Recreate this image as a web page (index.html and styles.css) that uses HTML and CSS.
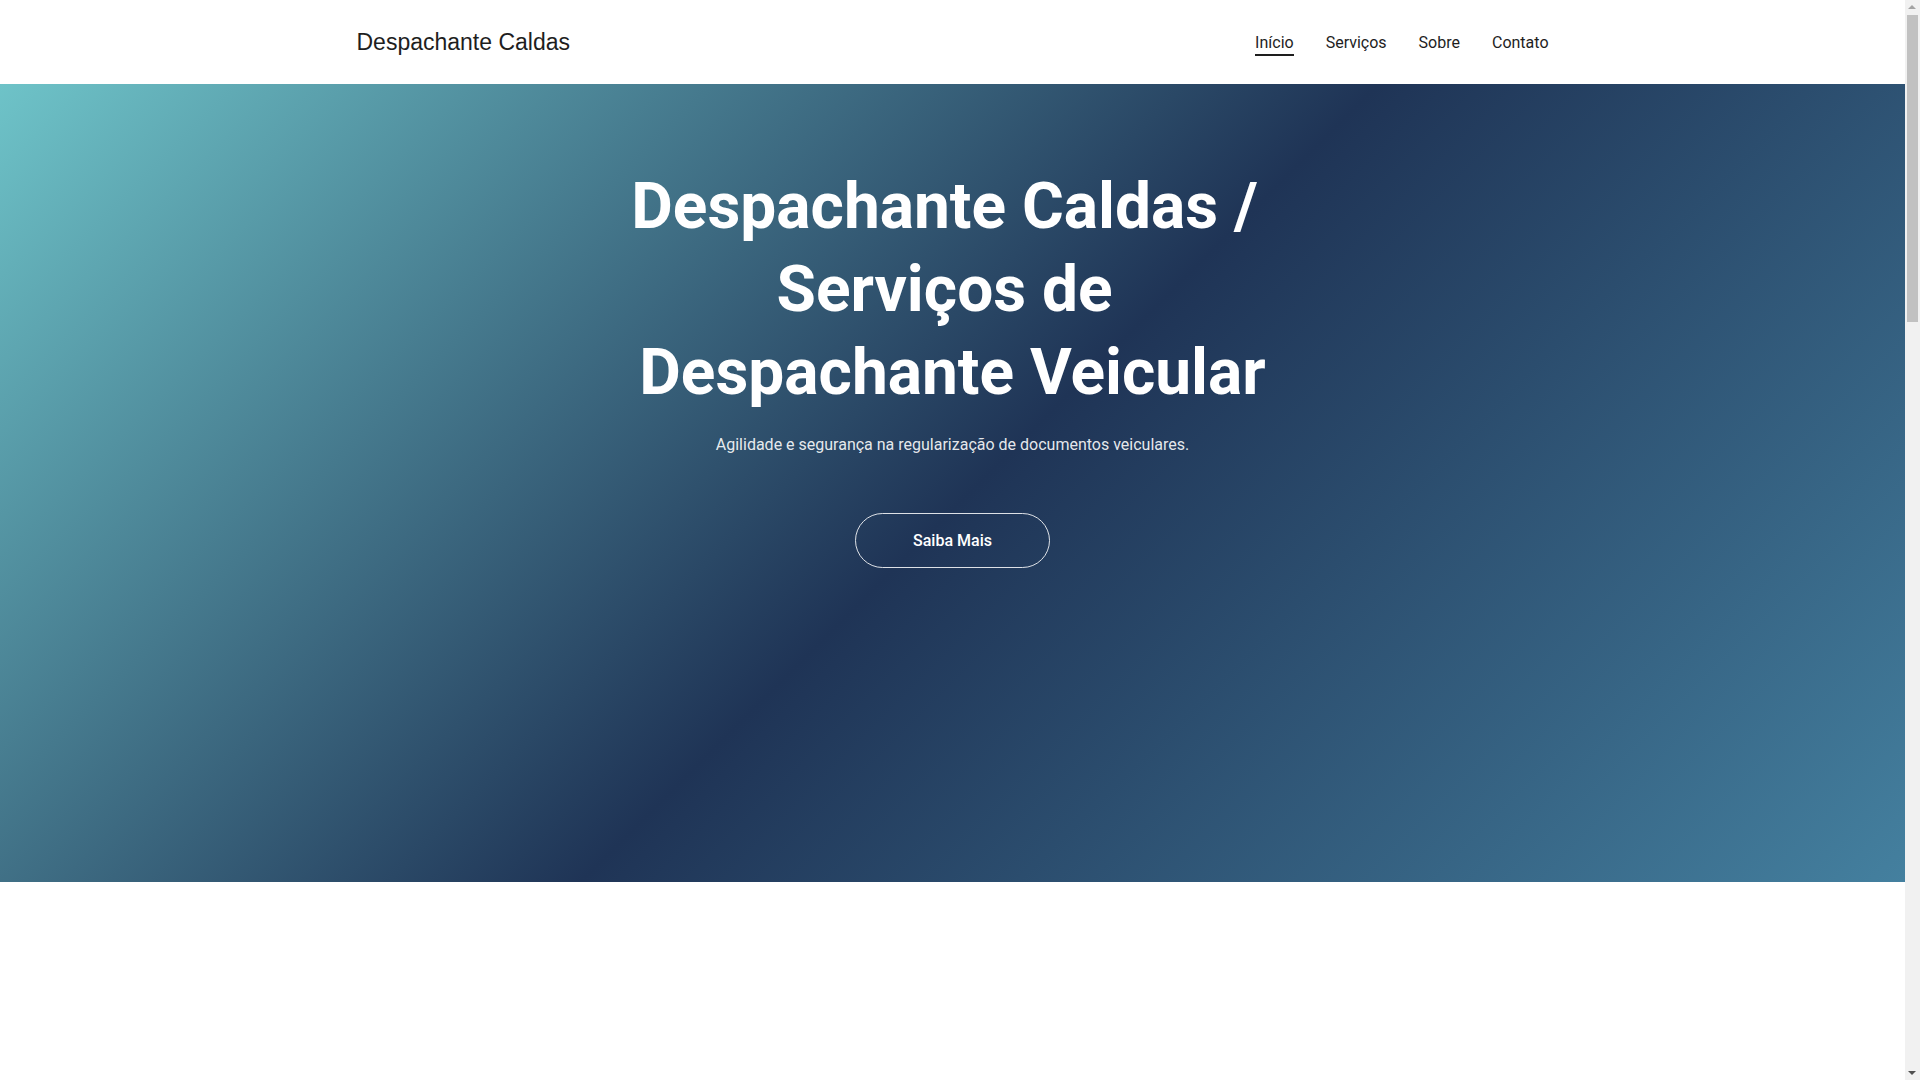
FILE: index.html
```html
<!DOCTYPE html>
<html lang="pt-BR">
<head>
<meta charset="utf-8">
<title>Despachante Caldas</title>
<link rel="stylesheet" href="styles.css">
</head>
<body>
<header class="site-header">
  <div class="container header-inner">
    <a class="logo" href="#">Despachante Caldas</a>
    <nav class="nav">
      <a class="nav-link active" href="#">Início</a>
      <a class="nav-link" href="#">Serviços</a>
      <a class="nav-link" href="#">Sobre</a>
      <a class="nav-link" href="#">Contato</a>
    </nav>
  </div>
</header>
<section class="hero">
  <h1 class="hero-title">Despachante Caldas / Serviços de Despachante Veicular</h1>
  <p class="hero-sub">Agilidade e segurança na regularização de documentos veiculares.</p>
  <a class="btn" href="#">Saiba Mais</a>
</section>
<section class="below"></section>
<div class="scrollbar" aria-hidden="true">
  <span class="sb-arrow sb-up"></span>
  <span class="sb-thumb"></span>
  <span class="sb-arrow sb-down"></span>
</div>
</body>
</html>
```
FILE: styles.css
```css
* { box-sizing: border-box; }
html, body { margin: 0; padding: 0; }
body {
  font-family: Roboto, "Liberation Sans", Arial, sans-serif;
  color: #1c1c1c;
  background: #ffffff;
  padding-right: 15px;
}
a { text-decoration: none; color: inherit; }

.container {
  width: 1192px;
  margin: 0 auto;
}
.site-header {
  height: 84px;
  background: #ffffff;
}
.header-inner {
  height: 100%;
  display: flex;
  align-items: center;
  justify-content: space-between;
}
.logo {
  font-family: "Liberation Sans", Arial, sans-serif;
  font-size: 23px;
  color: #1e1e1e;
  margin-top: 1px;
}
.nav {
  display: flex;
  gap: 32px;
}
.nav-link {
  font-size: 16px;
  line-height: 19px;
  color: #1e1e1e;
  padding: 0 0 2px;
  border-bottom: 2px solid transparent;
  margin-top: 4px;
}
.nav-link.active { border-bottom-color: #1e1e1e; }

.hero {
  height: 798px;
  padding-top: 81px;
  text-align: center;
  color: #ffffff;
  background: linear-gradient(135deg, #6ec3c8 0%, #1f3456 51%, #44809f 100%);
  display: flex;
  flex-direction: column;
  align-items: center;
}
.hero-title {
  max-width: 700px;
  margin: 0 auto 19px;
  font-size: 64px;
  line-height: 83px;
  font-weight: 700;
  white-space: break-spaces;
}
.hero-sub {
  margin: 0 0 56px;
  font-size: 16px;
  line-height: 24px;
  color: rgba(255,255,255,0.9);
}
.btn {
  display: inline-block;
  padding: 17px 57px;
  line-height: 19px;
  font-size: 16px;
  font-weight: 500;
  color: #ffffff;
  border: 1px solid rgba(255,255,255,0.85);
  border-radius: 30px;
}
.below {
  height: 2820px;
  background: #ffffff;
}

/* simulated browser scrollbar overlaying the right edge */
.scrollbar {
  position: fixed;
  top: 0;
  right: 0;
  width: 15px;
  height: 100vh;
  background: #f1f1f1;
}
.sb-thumb {
  position: absolute;
  top: 15px;
  left: 2px;
  width: 11px;
  height: 307px;
  background: #c1c1c1;
}
.sb-arrow {
  position: absolute;
  left: 3px;
  width: 0;
  height: 0;
  border-left: 4.5px solid transparent;
  border-right: 4.5px solid transparent;
}
.sb-up {
  top: 5px;
  border-bottom: 4px solid #a3a3a3;
}
.sb-down {
  bottom: 5px;
  border-top: 4px solid #505050;
}
```
